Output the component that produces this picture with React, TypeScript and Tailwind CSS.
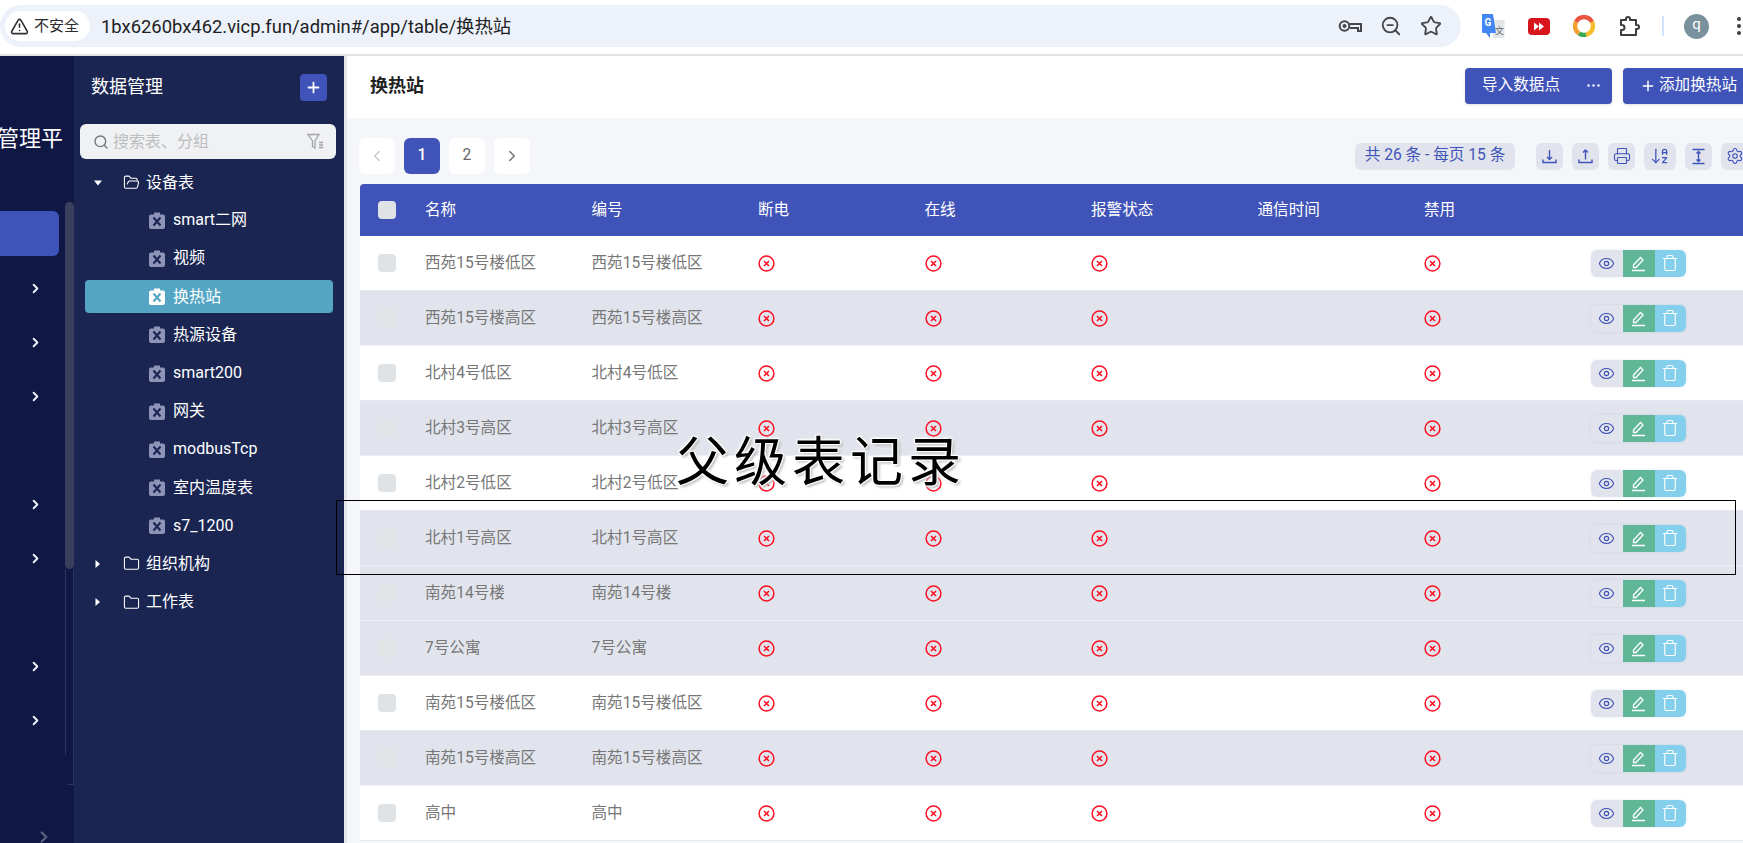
import React from 'react';
import { AlertTriangle, ArrowDownAZ, ChevronLeft, ChevronRight, Eye, Folder, FolderOpen, Plus, Printer, Search, Settings, Star, Trash, ZoomOut, Ellipsis } from 'lucide-react';

const rows = [
  { name: '西苑15号楼低区', white: true },
  { name: '西苑15号楼高区', white: false },
  { name: '北村4号低区', white: true },
  { name: '北村3号高区', white: false },
  { name: '北村2号低区', white: true },
  { name: '北村1号高区', white: false },
  { name: '南苑14号楼', white: false },
  { name: '7号公寓', white: false },
  { name: '南苑15号楼低区', white: true },
  { name: '南苑15号楼高区', white: false },
  { name: '高中', white: true },
];

const tables = ['smart二网', '视频', '换热站', '热源设备', 'smart200', '网关', 'modbusTcp', '室内温度表', 's7_1200'];
const columns = ['名称', '编号', '断电', '在线', '报警状态', '通信时间', '禁用'];
const menuRows = [true, true, true, false, true, true, false, true, true];

function ClipIcon({ active }: { active?: boolean }) {
  return (
    <svg width="16" height="17" viewBox="0 0 16 17" className="shrink-0">
      <path d="M5 0.500h6v2h3a2 2 0 0 1 2 2V15a2 2 0 0 1-2 2H2a2 2 0 0 1-2-2V4.500a2 2 0 0 1 2-2h3z" fill={active ? '#ffffff' : '#8e93b8'} />
      <path d="M4.500 5.500 11.500 13.500M11.500 5.500 4.500 13.500" stroke={active ? '#54a5c4' : '#1a2552'} strokeWidth="2" />
    </svg>
  );
}

function Caret({ open }: { open?: boolean }) {
  return (
    <svg width="8" height="8" viewBox="0 0 8 8" className="shrink-0">
      {open ? <path d="M0 1.500h8L4 6.500z" fill="#fff" /> : <path d="M1.500 0v8L6 4z" fill="#fff" />}
    </svg>
  );
}

function CrossCircle() {
  return (
    <svg width="17" height="17" viewBox="0 0 17 17">
      <circle cx="8.500" cy="8.500" r="7.400" fill="none" stroke="#ff0f22" strokeWidth="1.500" />
      <path d="M6 6l5 5M11 6l-5 5" stroke="#ff0f22" strokeWidth="1.600" />
    </svg>
  );
}

function TrayIcon({ up }: { up?: boolean }) {
  return (
    <svg width="17" height="17" viewBox="0 0 17 17" fill="none" stroke="#4053b8" strokeWidth="1.400">
      <path d="M2 11.500v3h13v-3" />
      {up ? <path d="M8.500 11.500V2M6 4.500 8.500 2 11 4.500" /> : <path d="M8.500 2v9.500M6 9 8.500 11.500 11 9" />}
    </svg>
  );
}

function HeightIcon() {
  return (
    <svg width="17" height="17" viewBox="0 0 17 17" fill="none" stroke="#4053b8" strokeWidth="1.400">
      <path d="M2.500 1.500h12M2.500 15.500h12M8.500 3.500v10M6.500 5.500l2-2 2 2M6.500 11.500l2 2 2-2" />
    </svg>
  );
}

function ToolButton({ children, w = 'w-[27px]' }: { children: React.ReactNode; w?: string }) {
  return <div className={`${w} h-[27px] shrink-0 flex items-center justify-center rounded-md bg-[#e1e4ec]`}>{children}</div>;
}

function BrowserBar() {
  return (
    <div className="h-[54px] bg-white flex items-start pt-[5px] shrink-0">
      <div className="w-[1461px] h-[42px] rounded-full bg-[#edf2fa] flex items-center pl-[5px] pr-[19px]">
        <div className="h-[30px] w-[85px] rounded-full bg-white flex items-center pl-[5px] gap-[5px] shrink-0">
          <AlertTriangle size={19} strokeWidth={2} color="#303236" />
          <span className="text-[15px] text-[#2b2c2f]">不安全</span>
        </div>
        <span className="ml-[11px] pt-[1px] text-[18.400px] text-[#202124]">1bx6260bx462.vicp.fun/admin#/app/table/换热站</span>
        <div className="ml-auto flex items-center gap-[18px] text-[#45474a]">
          <svg width="24" height="14" viewBox="0 0 24 14" fill="none" stroke="#45474a" strokeWidth="2">
            <circle cx="6.500" cy="7" r="4.800" />
            <path d="M11.500 5h11.500v7h-3v-3h-8" />
            <circle cx="6.500" cy="7" r="1" fill="#45474a" />
          </svg>
          <ZoomOut size={22} strokeWidth={2} />
          <Star size={22} strokeWidth={2} />
        </div>
      </div>
      <div className="ml-[21px] h-[42px] flex items-center">
        <svg width="23" height="25" viewBox="0 0 23 25">
          <path d="M9 6h13.500v18H11z" fill="#e3e5e6" />
          <path d="M0 0h11l3 19h-6v5l-4-5H1a1 1 0 0 1-1-1z" fill="#4285f4" />
          <text x="2.500" y="12" fontSize="10" fontWeight="700" fill="#fff">G</text>
          <text x="13" y="20" fontSize="9" fill="#666">文</text>
        </svg>
        <svg width="22" height="17" viewBox="0 0 22 17" className="ml-[23px]">
          <rect width="22" height="17" rx="4" fill="#d8141c" />
          <path d="M6 4.500v8l5-4zM11 4.500v8l5-4z" fill="#fff" />
        </svg>
        <svg width="22" height="22" viewBox="0 0 22 22" className="ml-[23px]" fill="none" strokeWidth="4.500">
          <path d="M3 7a9 9 0 0 1 16 0" stroke="#e8563f" />
          <path d="M19 7a9 9 0 0 1-6 12.800" stroke="#f6bd2d" />
          <path d="M13 19.800A9 9 0 0 1 6 18.500" stroke="#34a853" />
          <path d="M6 18.500A9 9 0 0 1 3 7" stroke="#f1a02f" />
        </svg>
        <svg width="22" height="22" viewBox="0 0 22 22" className="ml-[24px]" fill="none" stroke="#3c3d40" strokeWidth="2">
          <path d="M2 5h5V4a2 2 0 0 1 4 0v1h6v5h1a2 2 0 0 1 0 4h-1v6H2v-5h1a2.500 2.500 0 0 0 0-5H2z" strokeLinejoin="round" />
        </svg>
        <div className="ml-[21px] w-[2px] h-[20px] bg-[#d3e3fd]" />
        <div className="ml-[20px] w-[25px] h-[25px] rounded-full bg-[#7a929d] flex items-center justify-center text-[15px] leading-none text-white pb-[3px]">q</div>
        <div className="ml-[28px] flex flex-col gap-[3px]">
          <div className="w-[4px] h-[4px] rounded-full bg-[#3c3d40]" />
          <div className="w-[4px] h-[4px] rounded-full bg-[#3c3d40]" />
          <div className="w-[4px] h-[4px] rounded-full bg-[#3c3d40]" />
        </div>
      </div>
    </div>
  );
}

function MainMenu() {
  return (
    <div className="relative w-[74px] shrink-0 bg-[#0f1745] overflow-hidden">
      <div className="h-[150.500px] pt-[70px] whitespace-nowrap">
        <span className="block -ml-[3px] text-[22px] leading-[26px] text-white">管理平</span>
      </div>
      <div className="h-[54px] flex items-center">
        <div className="w-[59px] h-[45px] rounded-r-md bg-[#4053b8]" />
      </div>
      {menuRows.map((on, i) => (
        <div key={i} className="h-[54px] flex items-center pl-[28px] pt-[2px]">
          {on && <ChevronRight size={15} strokeWidth={3} color="#f0f1f6" />}
        </div>
      ))}
      <ChevronRight size={18} strokeWidth={3} color="#5d6180" className="absolute left-[35px] bottom-[-3px]" />
      <div className="absolute left-[65px] top-[146px] w-[9px] h-[367px] rounded-full bg-[#3a3f5c]" />
      <div className="absolute left-[65px] top-[513px] w-px h-[186px] bg-[#2e3560]" />
      <div className="absolute left-[68px] top-[513px] w-[6px] h-[216px] border-r border-b border-[#2e3560]" />
    </div>
  );
}

function TreeSidebar() {
  return (
    <div className="w-[270px] shrink-0 bg-[#1a2552] text-white">
      <div className="pt-[17px] pb-[1px] pl-[17px] pr-[17px] flex items-start justify-between">
        <span className="pt-[2px] text-[18px] leading-[24px]">数据管理</span>
        <div className="mt-[1px] w-[27px] h-[27px] rounded bg-[#4053b8] flex items-center justify-center">
          <Plus size={17} strokeWidth={2.500} />
        </div>
      </div>
      <div className="mt-[22px] ml-[6px] w-[256px] h-[35px] rounded-md bg-[#f0f1f3] flex items-center pl-[13px] pr-[12px]">
        <Search size={16} color="#6f7276" strokeWidth={2} />
        <span className="ml-[4px] text-[16px] text-[#bcbdbf]">搜索表、分组</span>
        <svg width="17" height="17" viewBox="0 0 17 17" className="ml-auto" fill="none" stroke="#a3a5a8" strokeWidth="1.300">
          <path d="M1 1.500h11L8 8v7L5.500 13.500V8zM12 9.500h4M12 12h4M12 14.500h4" />
        </svg>
      </div>
      <div className="mt-[4px] text-[16px]">
        <div className="h-[38.200px] flex items-center pl-[20px] pt-[1px]">
          <Caret open />
          <FolderOpen size={17} strokeWidth={1.500} className="ml-[21px]" />
          <span className="ml-[6px]">设备表</span>
        </div>
        {tables.map((t) => (
          <div key={t} className="h-[38.200px] flex items-center">
            <div className={t === '换热站' ? 'ml-[11px] w-[248px] h-[33px] rounded bg-[#54a5c4] flex items-center pl-[64px]' : 'ml-[11px] w-[248px] h-[33px] flex items-center pl-[64px]'}>
              <ClipIcon active={t === '换热站'} />
              <span className="ml-[8px]">{t}</span>
            </div>
          </div>
        ))}
        <div className="h-[38.200px] flex items-center pl-[20px]">
          <Caret />
          <Folder size={17} strokeWidth={1.500} className="ml-[21px]" />
          <span className="ml-[6px]">组织机构</span>
        </div>
        <div className="h-[38.200px] flex items-center pl-[20px]">
          <Caret />
          <Folder size={17} strokeWidth={1.500} className="ml-[21px]" />
          <span className="ml-[6px]">工作表</span>
        </div>
      </div>
    </div>
  );
}

function TableRow({ name, white }: { name: string; white: boolean }) {
  return (
    <div className={white ? 'h-[55px] flex items-center bg-white border-b border-[#e6e8ee] text-[15.600px] text-[#777]' : 'h-[55px] flex items-center bg-[#e1e4ec] border-b border-[#eceef3] text-[15.600px] text-[#777]'}>
      <div className="w-[55px] pl-[18px] shrink-0">
        <div className={white ? 'w-[18px] h-[18px] rounded-sm bg-[#dfe3e6]' : 'w-[18px] h-[18px] rounded-sm bg-[#e2e5e8]'} />
      </div>
      <div className="w-[166.500px] pl-[10px] pt-[2px] shrink-0">{name}</div>
      <div className="w-[166.500px] pl-[10px] pt-[2px] shrink-0">{name}</div>
      <div className="w-[166.500px] pl-[10px] shrink-0"><CrossCircle /></div>
      <div className="w-[166.500px] pl-[10px] shrink-0"><CrossCircle /></div>
      <div className="w-[166.500px] pl-[10px] shrink-0"><CrossCircle /></div>
      <div className="w-[166.500px] pl-[10px] shrink-0" />
      <div className="w-[166.500px] pl-[10px] shrink-0"><CrossCircle /></div>
      <div className="pl-[10px] shrink-0">
        <div className="flex h-[27px] rounded-md overflow-hidden shadow-[0_0_3px_rgba(64,83,184,0.12)]">
          <div className="w-[32px] bg-[#e1e4ec] flex items-center justify-center"><Eye size={17} color="#4053b8" strokeWidth={1.600} /></div>
          <div className="w-[32px] bg-[#60b798] flex items-center justify-center">
            <svg width="17" height="17" viewBox="0 0 17 17" fill="none" stroke="#fff" strokeWidth="1.300">
              <path d="M2 15.500h13M3.500 12.500V10L10.500 2.500 13 5 6 12.500z" />
            </svg>
          </div>
          <div className="w-[31px] bg-[#84d0ec] flex items-center justify-center"><Trash size={18} color="#fff" strokeWidth={1.500} /></div>
        </div>
      </div>
    </div>
  );
}

function Content() {
  return (
    <div className="flex-1 min-w-0 bg-[#f5f6fa] overflow-hidden">
      <div className="w-[1415px]">
        <div className="h-[62px] bg-white flex items-center pl-[23px] pb-[3px] text-white">
          <span className="text-[18px] font-bold text-[#222]">换热站</span>
          <div className="ml-auto flex items-center h-[36px] w-[147px] rounded bg-[#4053b8] pl-[17px] pr-[10px] text-[15.600px] shadow-sm">
            <span>导入数据点</span>
            <Ellipsis size={17} strokeWidth={1.500} className="ml-auto" />
          </div>
          <div className="ml-[11px] flex items-center h-[36px] w-[139px] rounded-l bg-[#4053b8] pl-[17px] text-[15.600px] shadow-sm">
            <Plus size={16} strokeWidth={2.200} />
            <span className="ml-[3px]">添加换热站</span>
          </div>
        </div>
        <div className="pl-[12px] pt-[20px] flex items-center pr-[14px]">
          <div className="flex gap-[9px] text-[15.600px]">
            <div className="w-[36px] h-[36px] rounded-md bg-white flex items-center justify-center"><ChevronLeft size={18} color="#c3c5c9" strokeWidth={1.600} /></div>
            <div className="w-[36px] h-[36px] rounded-md bg-[#4053b8] flex items-center justify-center text-white font-medium">1</div>
            <div className="w-[36px] h-[36px] rounded-md bg-white flex items-center justify-center text-[#666]">2</div>
            <div className="w-[36px] h-[36px] rounded-md bg-white flex items-center justify-center"><ChevronRight size={18} color="#666" strokeWidth={1.600} /></div>
          </div>
          <div className="ml-auto flex items-center">
            <div className="w-[160px] h-[27px] rounded-md bg-[#e1e4ec] flex items-center justify-center text-[15.600px] text-[#4053b8] whitespace-nowrap">共 26 条 - 每页 15 条</div>
            <div className="ml-[21px] flex items-center gap-[9px]">
              <ToolButton><TrayIcon /></ToolButton>
              <ToolButton><TrayIcon up /></ToolButton>
              <ToolButton><Printer size={18} color="#4053b8" strokeWidth={1.500} /></ToolButton>
              <ToolButton w="w-[32px]"><ArrowDownAZ size={20} color="#4053b8" strokeWidth={1.500} /></ToolButton>
              <ToolButton><HeightIcon /></ToolButton>
              <ToolButton><Settings size={18} color="#4053b8" strokeWidth={1.500} /></ToolButton>
            </div>
          </div>
        </div>
        <div className="ml-[13px] mt-[10px] rounded-t-sm overflow-hidden">
          <div className="h-[52px] flex items-center bg-[#4053b8] text-[15.600px] text-white">
            <div className="w-[55px] pl-[18px] shrink-0">
              <div className="w-[18px] h-[18px] rounded-sm bg-[#dfe3e6]" />
            </div>
            {columns.map((c) => (
              <div key={c} className="w-[166.500px] pl-[10px] pt-[1px] shrink-0">{c}</div>
            ))}
          </div>
          {rows.map((r, i) => (
            <TableRow key={i} name={r.name} white={r.white} />
          ))}
        </div>
      </div>
    </div>
  );
}

export default function App() {
  return (
    <div className="relative w-[1743px] h-[843px] overflow-hidden flex flex-col bg-white [font-family:Roboto,'Noto_Sans_CJK_SC',sans-serif]">
      <BrowserBar />
      <div className="h-[2px] bg-[#e3e3e3] shrink-0" />
      <div className="flex-1 flex min-h-0">
        <MainMenu />
        <TreeSidebar />
        <div className="w-[3px] shrink-0 bg-[#e4e6ea]" />
        <Content />
      </div>
      {/* annotation drawn over the screenshot */}
      <div className="absolute left-[336px] top-[500px] w-[1400px] h-[75px] border border-black" />
      <div className="absolute left-[676px] top-[429px] whitespace-nowrap text-[53px] leading-[68px] tracking-[5px] text-black [text-shadow:-1px_-1px_1px_#fff,1px_-1px_1px_#fff,-1px_1px_1px_#fff,1px_1px_1px_#fff,0_0_4px_#fff,2px_2px_3px_#999]">父级表记录</div>
    </div>
  );
}
